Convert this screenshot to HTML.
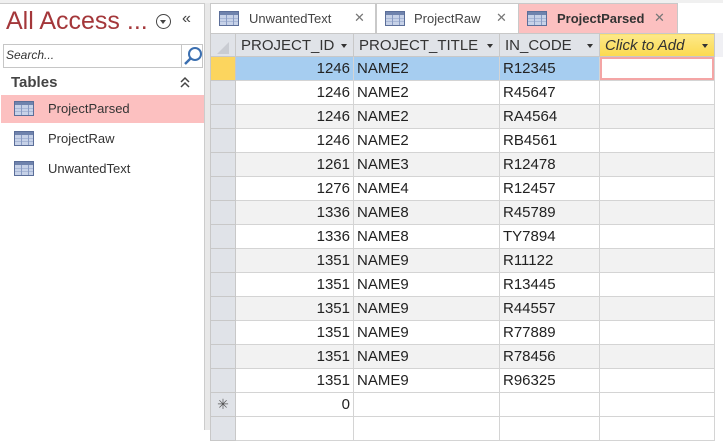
<html><head><style>
body{margin:0;width:723px;height:430px;overflow:hidden;background:#fff;font-family:"Liberation Sans",sans-serif;position:relative}
.a{position:absolute}
.ti{color:#a4373a;font-size:25px;left:6px;top:7px}
.ico{width:20px;height:15px;background:linear-gradient(#6f83ad 0 3px,transparent 3px),repeating-linear-gradient(90deg,#c7d2e8 0 6px,#8a9cc4 6px 7px),#fff;border:1px solid #5b6e99;box-sizing:border-box}
.ico::after{content:"";position:absolute;left:0;right:0;top:3px;bottom:0;background:repeating-linear-gradient(#0000 0 2.8px,#8a9cc4 2.8px 3.6px)}
.nav{font-size:13px;color:#333}
table{border-collapse:collapse;font-size:15px;color:#222;table-layout:fixed}
td{height:24px;border:1px solid #d4d4d4;padding:0 3px;white-space:nowrap;overflow:hidden}
td.s{background:#e0e3e8;border-color:#c8c8c8}
tr:nth-child(odd) td{background:#f2f2f2}
tr:nth-child(odd) td.s{background:#e0e3e8}
td.n{text-align:right}
th{height:23px;background:#e0e3e8;font-weight:normal;text-align:left;padding:0 5px;border:1px solid #c8c8c8;font-size:15px;color:#333;position:relative}
.dd{position:absolute;right:6px;top:10px;border:3.5px solid transparent;border-top:4px solid #333;width:0;height:0}
.tab{top:3px;height:30px;border:1px solid #c9c9c9;border-bottom:none;box-sizing:border-box;font-size:13px;color:#444}
.x{font-size:13px;color:#777;top:6px}
</style></head><body>
<div class="a" style="left:0;top:0;width:723px;height:3px;background:#f0f0f0;border-bottom:1px solid #ccc"></div>
<div class="a ti">All Access ...</div>
<div class="a" style="left:156px;top:14px;width:13px;height:13px;border:1.5px solid #444;border-radius:50%"></div>
<div class="a" style="left:160px;top:20px;border:3.5px solid transparent;border-top:4px solid #444"></div>
<div class="a" style="left:182px;top:10px;font-size:16px;color:#444">«</div>
<div class="a" style="left:3px;top:44px;width:200px;height:24px;border:1px solid #c6c6c6;box-sizing:border-box"></div>
<div class="a" style="left:181px;top:44px;width:1px;height:24px;background:#c6c6c6"></div>
<div class="a" style="left:6px;top:48px;font-size:12px;font-style:italic;color:#333">Search...</div>
<svg class="a" style="left:183px;top:46px" width="20" height="20"><circle cx="12" cy="8" r="6" fill="none" stroke="#3b6fb0" stroke-width="2"/><line x1="8" y1="12" x2="2" y2="18" stroke="#3b6fb0" stroke-width="2.5"/></svg>
<div class="a" style="left:11px;top:74px;font-size:15px;font-weight:bold;color:#444">Tables</div>
<svg class="a" style="left:179px;top:76px" width="12" height="12"><path d="M2 6 L6 2 L10 6 M2 11 L6 7 L10 11" fill="none" stroke="#444" stroke-width="1.5"/></svg>
<div class="a" style="left:1px;top:95px;width:203px;height:28px;background:#fcc0c0"></div>
<div class="a ico" style="left:14px;top:101px"></div><div class="a nav" style="left:48px;top:101px">ProjectParsed</div>
<div class="a ico" style="left:14px;top:131px"></div><div class="a nav" style="left:48px;top:131px">ProjectRaw</div>
<div class="a ico" style="left:14px;top:161px"></div><div class="a nav" style="left:48px;top:161px">UnwantedText</div>
<div class="a" style="left:204px;top:3px;width:6px;height:427px;background:#e8e8e8;border-left:1px solid #ccc"></div>
<div class="a" style="left:210px;top:3px;width:513px;height:30px;background:#fff"></div>
<div class="a tab" style="left:210px;width:166px"><div class="a ico" style="left:8px;top:7px"></div><span class="a" style="left:38px;top:7px">UnwantedText</span><span class="a x" style="left:143px">✕</span></div>
<div class="a tab" style="left:376px;width:143px"><div class="a ico" style="left:8px;top:7px"></div><span class="a" style="left:37px;top:7px">ProjectRaw</span><span class="a x" style="left:119px">✕</span></div>
<div class="a tab" style="left:518px;width:160px;background:#fcc0c0"><div class="a ico" style="left:8px;top:7px"></div><span class="a" style="left:38px;top:7px;font-weight:bold;color:#333">ProjectParsed</span><span class="a x" style="left:135px">✕</span></div>
<div class="a" style="left:210px;top:33px;width:513px;height:397px;background:#fff"></div>
<div class="a" style="left:713px;top:33px;width:10px;height:24px;background:#f0f0f4"></div>
<table class="a" style="left:210px;top:33px;width:504px">
<colgroup><col style="width:25px"><col style="width:118px"><col style="width:146px"><col style="width:100px"><col style="width:115px"></colgroup>
<thead><tr><th style="padding:0"><div class="a" style="left:6px;top:8px;width:0;height:0;border:6px solid transparent;border-right-color:#c9ccd2;border-bottom-color:#c9ccd2"></div></th><th>PROJECT_ID<i class="dd"></i></th><th>PROJECT_TITLE<i class="dd"></i></th><th>IN_CODE<i class="dd"></i></th><th style="background:linear-gradient(#fde98a,#fcd94f);font-style:italic">Click to Add<i class="dd"></i></th></tr></thead>
<tbody>
<tr><td class="s" style="background:#fcd55e!important"></td><td class="n" style="background:#a6cdf0">1246</td><td style="background:#a6cdf0">NAME2</td><td style="background:#a6cdf0">R12345</td><td style="background:#fff;box-shadow:inset 0 0 0 2px #f4a5a5"></td></tr>
<tr><td class="s"></td><td class="n">1246</td><td>NAME2</td><td>R45647</td><td></td></tr>
<tr><td class="s"></td><td class="n">1246</td><td>NAME2</td><td>RA4564</td><td></td></tr>
<tr><td class="s"></td><td class="n">1246</td><td>NAME2</td><td>RB4561</td><td></td></tr>
<tr><td class="s"></td><td class="n">1261</td><td>NAME3</td><td>R12478</td><td></td></tr>
<tr><td class="s"></td><td class="n">1276</td><td>NAME4</td><td>R12457</td><td></td></tr>
<tr><td class="s"></td><td class="n">1336</td><td>NAME8</td><td>R45789</td><td></td></tr>
<tr><td class="s"></td><td class="n">1336</td><td>NAME8</td><td>TY7894</td><td></td></tr>
<tr><td class="s"></td><td class="n">1351</td><td>NAME9</td><td>R11122</td><td></td></tr>
<tr><td class="s"></td><td class="n">1351</td><td>NAME9</td><td>R13445</td><td></td></tr>
<tr><td class="s"></td><td class="n">1351</td><td>NAME9</td><td>R44557</td><td></td></tr>
<tr><td class="s"></td><td class="n">1351</td><td>NAME9</td><td>R77889</td><td></td></tr>
<tr><td class="s"></td><td class="n">1351</td><td>NAME9</td><td>R78456</td><td></td></tr>
<tr><td class="s"></td><td class="n">1351</td><td>NAME9</td><td>R96325</td><td></td></tr>
<tr><td class="s" style="background:#e0e3e8;text-align:center;color:#555;font-size:14px">✳</td><td class="n" style="background:#fff">0</td><td style="background:#fff"></td><td style="background:#fff"></td><td style="background:#fff"></td></tr>
<tr><td class="s" style="background:#e0e3e8"></td><td style="background:#fff"></td><td style="background:#fff"></td><td style="background:#fff"></td><td style="background:#fff"></td></tr>
</tbody></table>
</body></html>
